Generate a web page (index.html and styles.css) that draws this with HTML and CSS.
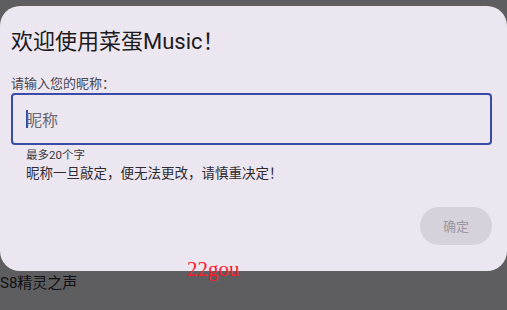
FILE: index.html
```html
<!DOCTYPE html>
<html lang="zh">
<head>
<meta charset="utf-8">
<link rel="stylesheet" href="styles.css">
</head>
<body>
<div class="dialog">
  <h1 class="title">欢迎使用菜蛋Music！</h1>
  <div class="label">请输入您的昵称：</div>
  <div class="field">
    <span class="caret"></span><span class="placeholder">昵称</span>
  </div>
  <div class="helper">最多20个字</div>
  <div class="note">昵称一旦敲定，便无法更改，请慎重决定！</div>
  <div class="actions">
    <button class="btn">确定</button>
  </div>
</div>
<div class="footer">S8精灵之声</div>
<div class="watermark">22gou</div>
</body>
</html>
```
FILE: styles.css
```css
html, body {
  margin: 0;
  padding: 0;
}
body {
  width: 507px;
  height: 310px;
  overflow: hidden;
  background: #5e5e60;
  font-family: Roboto, "Noto Sans CJK SC", sans-serif;
  position: relative;
}
.dialog {
  margin-top: 6px;
  height: 265px;
  box-sizing: border-box;
  background: #ece6f0;
  border-radius: 20px;
  padding: 23px 15px 0 11px;
}
.title {
  margin: 0;
  font-size: 22px;
  font-weight: 400;
  line-height: 26px;
  color: #1d1b20;
}
.label {
  margin-top: 21px;
  font-size: 13px;
  line-height: 16px;
  color: #49454f;
}
.field {
  margin-top: 1px;
  height: 52px;
  box-sizing: border-box;
  border: 2px solid #3a4aa6;
  border-radius: 4px;
  padding-left: 13px;
  display: flex;
  align-items: center;
}
.caret {
  width: 2px;
  height: 18px;
  background: #3a4aa6;
  margin-right: -2px;
}
.placeholder {
  font-size: 16px;
  color: #6a676e;
}
.helper {
  margin-top: 3px;
  padding-left: 15px;
  font-size: 11.5px;
  line-height: 14px;
  color: #3a383e;
}
.note {
  margin-top: 3px;
  padding-left: 15px;
  font-size: 13.5px;
  line-height: 16px;
  color: #2e2c32;
}
.actions {
  margin-top: 26px;
  display: flex;
  justify-content: flex-end;
}
.btn {
  width: 72px;
  height: 38px;
  border: none;
  border-radius: 19px;
  background: #d7d1db;
  color: #9a969e;
  font-family: Roboto, "Noto Sans CJK SC", sans-serif;
  font-size: 13px;
  padding: 0 0 2px;
}
.footer {
  margin-top: 4px;
  font-size: 15px;
  line-height: 16px;
  color: #111;
}
.watermark {
  position: absolute;
  left: 187px;
  top: 257px;
  font-family: "Liberation Serif", serif;
  font-size: 21px;
  color: #ff1a2e;
}
```
